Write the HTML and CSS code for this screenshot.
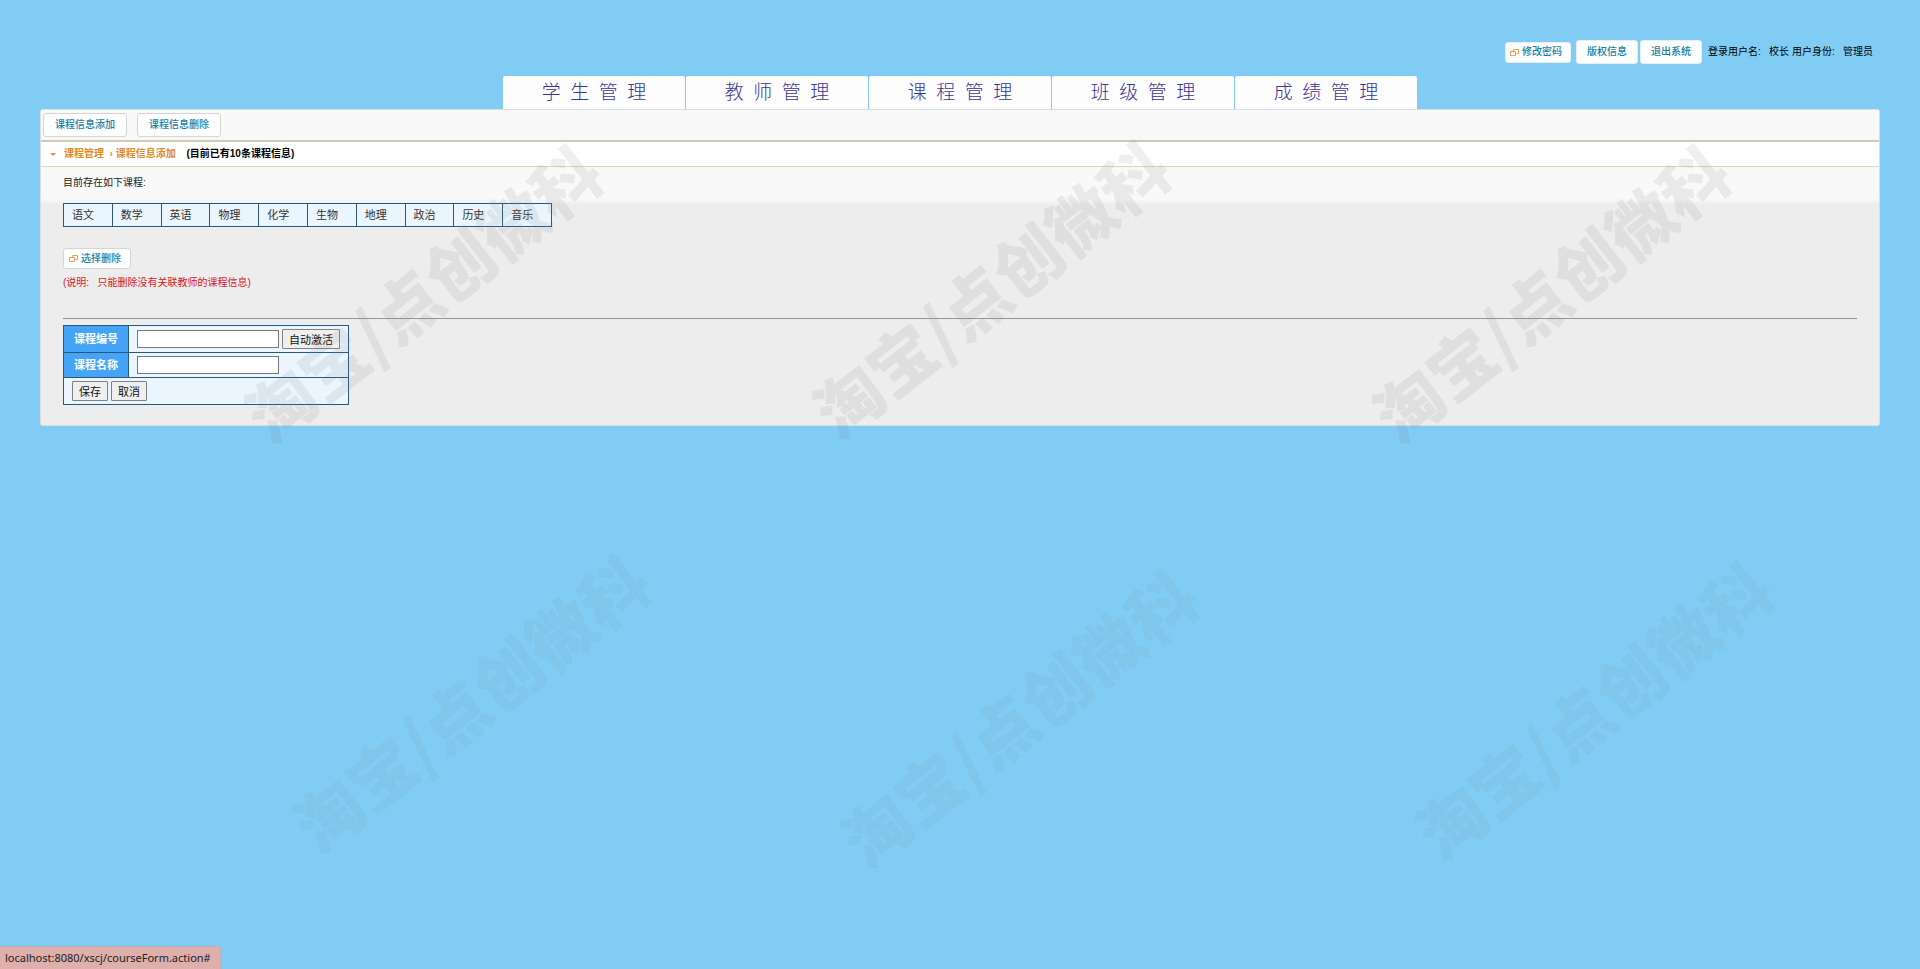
FILE: index.html
```
<!DOCTYPE html>
<html lang="zh-CN">
<head>
    <meta charset="UTF-8">
    <meta name="viewport" content="width=device-width, initial-scale=1.0">
    <title>课程信息添加</title>
    <link rel="stylesheet" href="styles.css">
</head>
<body>
    <header class="top">
        <a class="btn btn-icon" href="#"><svg class="icon" viewBox="0 0 9 9"><path d="M3.500 3V1.500h5v4H6.500M.5 3.500h5v4h-5z" /></svg>修改密码</a>
        <div class="top-links">
            <a class="btn" href="#">版权信息</a>
            <a class="btn" href="#">退出系统</a>
        </div>
        <span class="user">登录用户名:&nbsp; &nbsp;校长 用户身份:&nbsp; &nbsp;管理员</span>
    </header>

    <nav class="tabs">
        <a href="#">学&nbsp; 生&nbsp; 管&nbsp; 理</a>
        <a href="#">教&nbsp; 师&nbsp; 管&nbsp; 理</a>
        <a href="#">课&nbsp; 程&nbsp; 管&nbsp; 理</a>
        <a href="#">班&nbsp; 级&nbsp; 管&nbsp; 理</a>
        <a href="#">成&nbsp; 绩&nbsp; 管&nbsp; 理</a>
    </nav>

    <main class="panel">
        <div class="toolbar">
            <a class="btn" href="#">课程信息添加</a>
            <a class="btn" href="#">课程信息删除</a>
        </div>

        <h1 class="crumbs">
            <span class="arrow"></span>
            <span class="path">课程管理&nbsp; › 课程信息添加</span>
            <span>&nbsp;(目前已有10条课程信息)</span>
        </h1>

        <div class="content">
            <p class="intro">目前存在如下课程:</p>
            <table class="courses">
                <tr>
                    <td>语文</td>
                    <td>数学</td>
                    <td>英语</td>
                    <td>物理</td>
                    <td>化学</td>
                    <td>生物</td>
                    <td>地理</td>
                    <td>政治</td>
                    <td>历史</td>
                    <td>音乐</td>
                </tr>
            </table>
            <a class="btn btn-icon" href="#"><svg class="icon" viewBox="0 0 9 9"><path d="M3.500 3V1.500h5v4H6.500M.5 3.500h5v4h-5z" /></svg>选择删除</a>
            <p class="note">(说明:&nbsp; &nbsp;只能删除没有关联教师的课程信息)</p>
            <hr>
            <form>
                <table class="course-form">
                    <tr>
                        <th><label for="course-id">课程编号</label></th>
                        <td><div class="field"><input type="text" id="course-id"><button type="button">自动激活</button></div></td>
                    </tr>
                    <tr>
                        <th><label for="course-name">课程名称</label></th>
                        <td><div class="field"><input type="text" id="course-name"></div></td>
                    </tr>
                    <tr>
                        <td colspan="2"><div class="field"><button type="button">保存</button><button type="reset">取消</button></div></td>
                    </tr>
                </table>
            </form>
        </div>
    </main>

    <div class="marks" aria-hidden="true">
        <span class="mark mark-1">淘宝/点创微科</span>
        <span class="mark mark-2">淘宝/点创微科</span>
        <span class="mark mark-3">淘宝/点创微科</span>
        <span class="mark mark-4">淘宝/点创微科</span>
        <span class="mark mark-5">淘宝/点创微科</span>
        <span class="mark mark-6">淘宝/点创微科</span>
    </div>

    <div class="status">localhost:8080/xscj/courseForm.action#</div>
</body>
</html>
```
FILE: styles.css
```
* {
    box-sizing: border-box;
}
body {
    margin: 0;
    padding: 40px 40px 0;
    min-height: 100vh;
    background: #80ccf4;
    color: #000;
    font-family: "Liberation Sans", "Noto Sans CJK SC", sans-serif;
    font-size: 10px;
    line-height: 16px;
}
a {
    text-decoration: none;
}
p {
    margin: 0;
}

/* buttons */
.btn {
    display: inline-flex;
    align-items: center;
    height: 24px;
    padding: 0 11px;
    border: 1px solid #d8d4d4;
    border-radius: 3px;
    background: #fcfdfd;
    color: #1a7da8;
    font-weight: 500;
}
.btn-icon {
    height: 21px;
    padding: 0 9px 0 5px;
    gap: 3px;
}
.icon {
    width: 9px;
    height: 9px;
    fill: none;
    stroke: #e8a050;
}

/* top line */
.top {
    display: flex;
    justify-content: flex-end;
    align-items: center;
    gap: 5px;
    height: 24px;
    padding-right: 7px;
}
.top-links {
    display: flex;
    gap: 2px;
}
.top .btn {
    border-color: #e4eef4;
    padding: 0 10px;
}
.top .btn-icon {
    padding: 0 8px 0 4px;
}
.user {
    padding-left: 1px;
}

/* main menu */
.tabs {
    display: flex;
    justify-content: center;
    gap: 1px;
    margin-top: 12px;
}
.tabs a {
    width: 182px;
    height: 33px;
    border-radius: 2px 2px 0 0;
    background: #fdfdfe;
    color: #3c3490;
    font-family: "Liberation Serif", "Noto Sans CJK SC", serif;
    font-size: 19px;
    font-weight: 300;
    line-height: 33px;
    text-align: center;
}

/* panel */
.panel {
    border: 1px solid #d8dfe2;
    border-radius: 3px;
    background: #ededed;
}
.toolbar {
    display: flex;
    gap: 10px;
    padding: 3px 2px;
    background: #f8f8f8;
}
.crumbs {
    display: flex;
    align-items: center;
    gap: 8px;
    height: 27px;
    margin: 0;
    padding-left: 9px;
    border-top: 2px solid #cbccb0;
    border-bottom: 1px solid #dcd9a4;
    background: #fff;
    font-size: 10px;
    font-weight: 700;
}
.arrow {
    border: 3px solid transparent;
    border-top-color: #d89040;
    border-bottom: 0;
}
.path {
    color: #dc8c28;
}
.content {
    padding: 8px 22px 20px;
    background: linear-gradient(#f9f9fa 32px, #ededed 38px);
}
.intro {
    margin-bottom: 12px;
    color: #222;
}
table {
    border-collapse: collapse;
    background: #eaf5fe;
    font-size: 11px;
}
th, td {
    border: 1px solid #285880;
}
.courses {
    width: 489px;
    margin-bottom: 21px;
    color: #333;
}
.courses td {
    height: 23px;
    padding: 0 8px;
}
.note {
    margin-top: 6px;
    color: #d81818;
}
hr {
    margin: 27px 0 6px;
    border: 0;
    border-top: 1px solid #909696;
}

/* course form */
.course-form th {
    width: 65px;
    padding: 0;
    background: #45a4f6;
    color: #fff;
}
.course-form td {
    padding: 3px 8px;
}
.field {
    display: flex;
    align-items: center;
    gap: 3px;
}
.course-form input {
    width: 142px;
    height: 18px;
    border: 1px solid #767676;
    border-radius: 0;
    background: #fff;
}
.course-form button {
    height: 20px;
    padding: 0 6px;
    border: 1px solid #808080;
    border-radius: 1px;
    background: #efefef;
    color: #111;
    font-family: inherit;
    font-size: 11px;
}

/* watermark over the page */
.marks {
    position: absolute;
    inset: 0;
    overflow: hidden;
    pointer-events: none;
}
.mark {
    position: absolute;
    transform: translate(-50%, -50%) rotate(-38deg);
    color: rgba(128, 128, 128, 0.13);
    font-family: "Noto Sans CJK SC", sans-serif;
    font-size: 67px;
    font-weight: 900;
    line-height: 1;
    white-space: nowrap;
}
.mark-1 { left: 421px; top: 291px; }
.mark-2 { left: 989px; top: 287px; }
.mark-3 { left: 1549px; top: 291px; }
.mark-4 { left: 469px; top: 701px; }
.mark-5 { left: 1017px; top: 716px; }
.mark-6 { left: 1592px; top: 708px; }
.mark-4, .mark-5, .mark-6 {
    color: rgba(128, 128, 128, 0.09);
}

/* link address */
.status {
    position: fixed;
    left: 0;
    bottom: 0;
    padding: 3px 9px 3px 5px;
    border-top: 1px solid #bcb0b8;
    border-right: 1px solid #bcb0b8;
    border-radius: 0 3px 0 0;
    background: #dfafab;
    color: #222;
    font-family: "Noto Sans", sans-serif;
    font-size: 11px;
}
```
